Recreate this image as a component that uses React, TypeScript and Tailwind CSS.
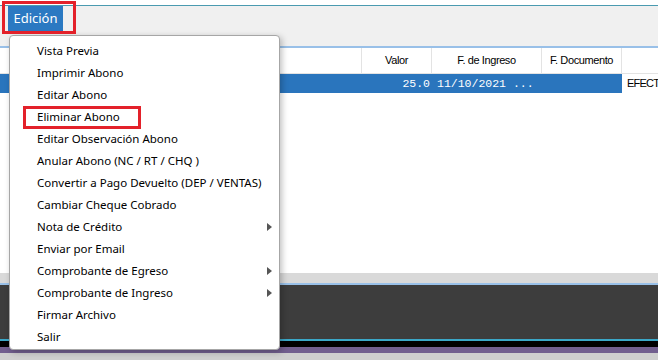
const menuItems: { label: string; sub?: boolean }[] = [
  { label: 'Vista Previa' },
  { label: 'Imprimir Abono' },
  { label: 'Editar Abono' },
  { label: 'Eliminar Abono' },
  { label: 'Editar Observación Abono' },
  { label: 'Anular Abono (NC / RT / CHQ )' },
  { label: 'Convertir a Pago Devuelto (DEP / VENTAS)' },
  { label: 'Cambiar Cheque Cobrado' },
  { label: 'Nota de Crédito', sub: true },
  { label: 'Enviar por Email' },
  { label: 'Comprobante de Egreso', sub: true },
  { label: 'Comprobante de Ingreso', sub: true },
  { label: 'Firmar Archivo' },
  { label: 'Salir' },
];

const uiFont = { fontFamily: '"Segoe UI", "Noto Sans", "Open Sans", sans-serif' };

export default function App() {
  return (
    <div className="relative w-[658px] h-[360px] overflow-hidden bg-white flex flex-col" style={uiFont}>
      {/* window top */}
      <div className="h-[5px] shrink-0 bg-white" />
      <div className="h-px shrink-0 bg-[#4a9ab0]" />

      {/* menu bar */}
      <div className="h-[40px] shrink-0 bg-[#f0f0f0] pl-[8px]">
        <div className="w-[55px] h-[25px] bg-[#2b79c2] text-white text-[13px] flex items-center justify-center">
          Edición
        </div>
      </div>
      <div className="h-[2px] shrink-0 bg-[#99c0e8]" />

      {/* table header */}
      <div
        className="h-[25px] shrink-0 flex bg-white text-[11px] text-black tracking-[-0.4px]"
        style={{ fontFamily: '"Liberation Sans", Arial, sans-serif' }}
      >
        <div className="w-[362px] shrink-0 border-r border-[#e3e3e3]" />
        <div className="w-[70px] shrink-0 border-r border-[#e3e3e3] flex items-center justify-center">Valor</div>
        <div className="w-[110px] shrink-0 border-r border-[#e3e3e3] flex items-center justify-center">F. de Ingreso</div>
        <div className="w-[80px] shrink-0 border-r border-[#e3e3e3] flex items-center justify-center">F. Documento</div>
        <div className="flex-1" />
      </div>

      {/* selected row */}
      <div className="h-[20px] shrink-0 flex border-t border-[#e3e3e3]">
        <div
          className="w-[622px] shrink-0 bg-[#2a75bd] text-white text-[11.5px] flex items-center"
          style={{ fontFamily: '"Liberation Mono", "DejaVu Sans Mono", monospace' }}
        >
          <div className="w-[430px] text-right">25.0</div>
          <div className="pl-[7px] whitespace-pre">11/10/2021 ...</div>
        </div>
        <div
          className="flex-1 min-w-0 whitespace-nowrap pl-[5px] flex items-center text-[11px] tracking-[-0.8px] text-black"
          style={{ fontFamily: '"Liberation Sans", Arial, sans-serif' }}
        >
          EFECT
        </div>
      </div>

      <div className="h-[180px] shrink-0 bg-white" />

      {/* lower panel */}
      <div className="h-[10px] shrink-0 bg-[#d9d9d9]" />
      <div className="h-[2px] shrink-0 bg-[#99c0e8]" />
      <div className="h-[54px] shrink-0 bg-[#3d3d3d]" />
      <div className="h-[2px] shrink-0 bg-[#3ba8c8]" />
      <div className="h-[6px] shrink-0 bg-black" />
      <div className="h-[6px] shrink-0 bg-[#725f8f]" />
      <div className="h-[7px] shrink-0 bg-[#cfcfcf]" />

      {/* dropdown menu */}
      <div className="absolute left-[9px] top-[35px] w-[271px] h-[315px] bg-white border border-[#a6a6a6] rounded-[4px] shadow-[2px_2px_6px_rgba(0,0,0,0.25)] pt-[4px]">
        {menuItems.map((item) => (
          <div key={item.label} className="relative h-[22px] pl-[27px] flex items-center text-[11.5px] text-black">
            {item.label}
            {item.sub && (
              <svg className="absolute right-[7px] top-[7px]" width="5" height="8" viewBox="0 0 5 8">
                <path d="M0 0 L5 4 L0 8 Z" fill="#555" />
              </svg>
            )}
          </div>
        ))}
      </div>

      {/* annotation boxes */}
      <div className="absolute left-[2px] top-[1px] w-[74px] h-[33px] border-[3px] border-[#e3212a]" />
      <div className="absolute left-[23px] top-[106px] w-[118px] h-[23px] border-[3px] border-[#e3212a]" />
    </div>
  );
}
